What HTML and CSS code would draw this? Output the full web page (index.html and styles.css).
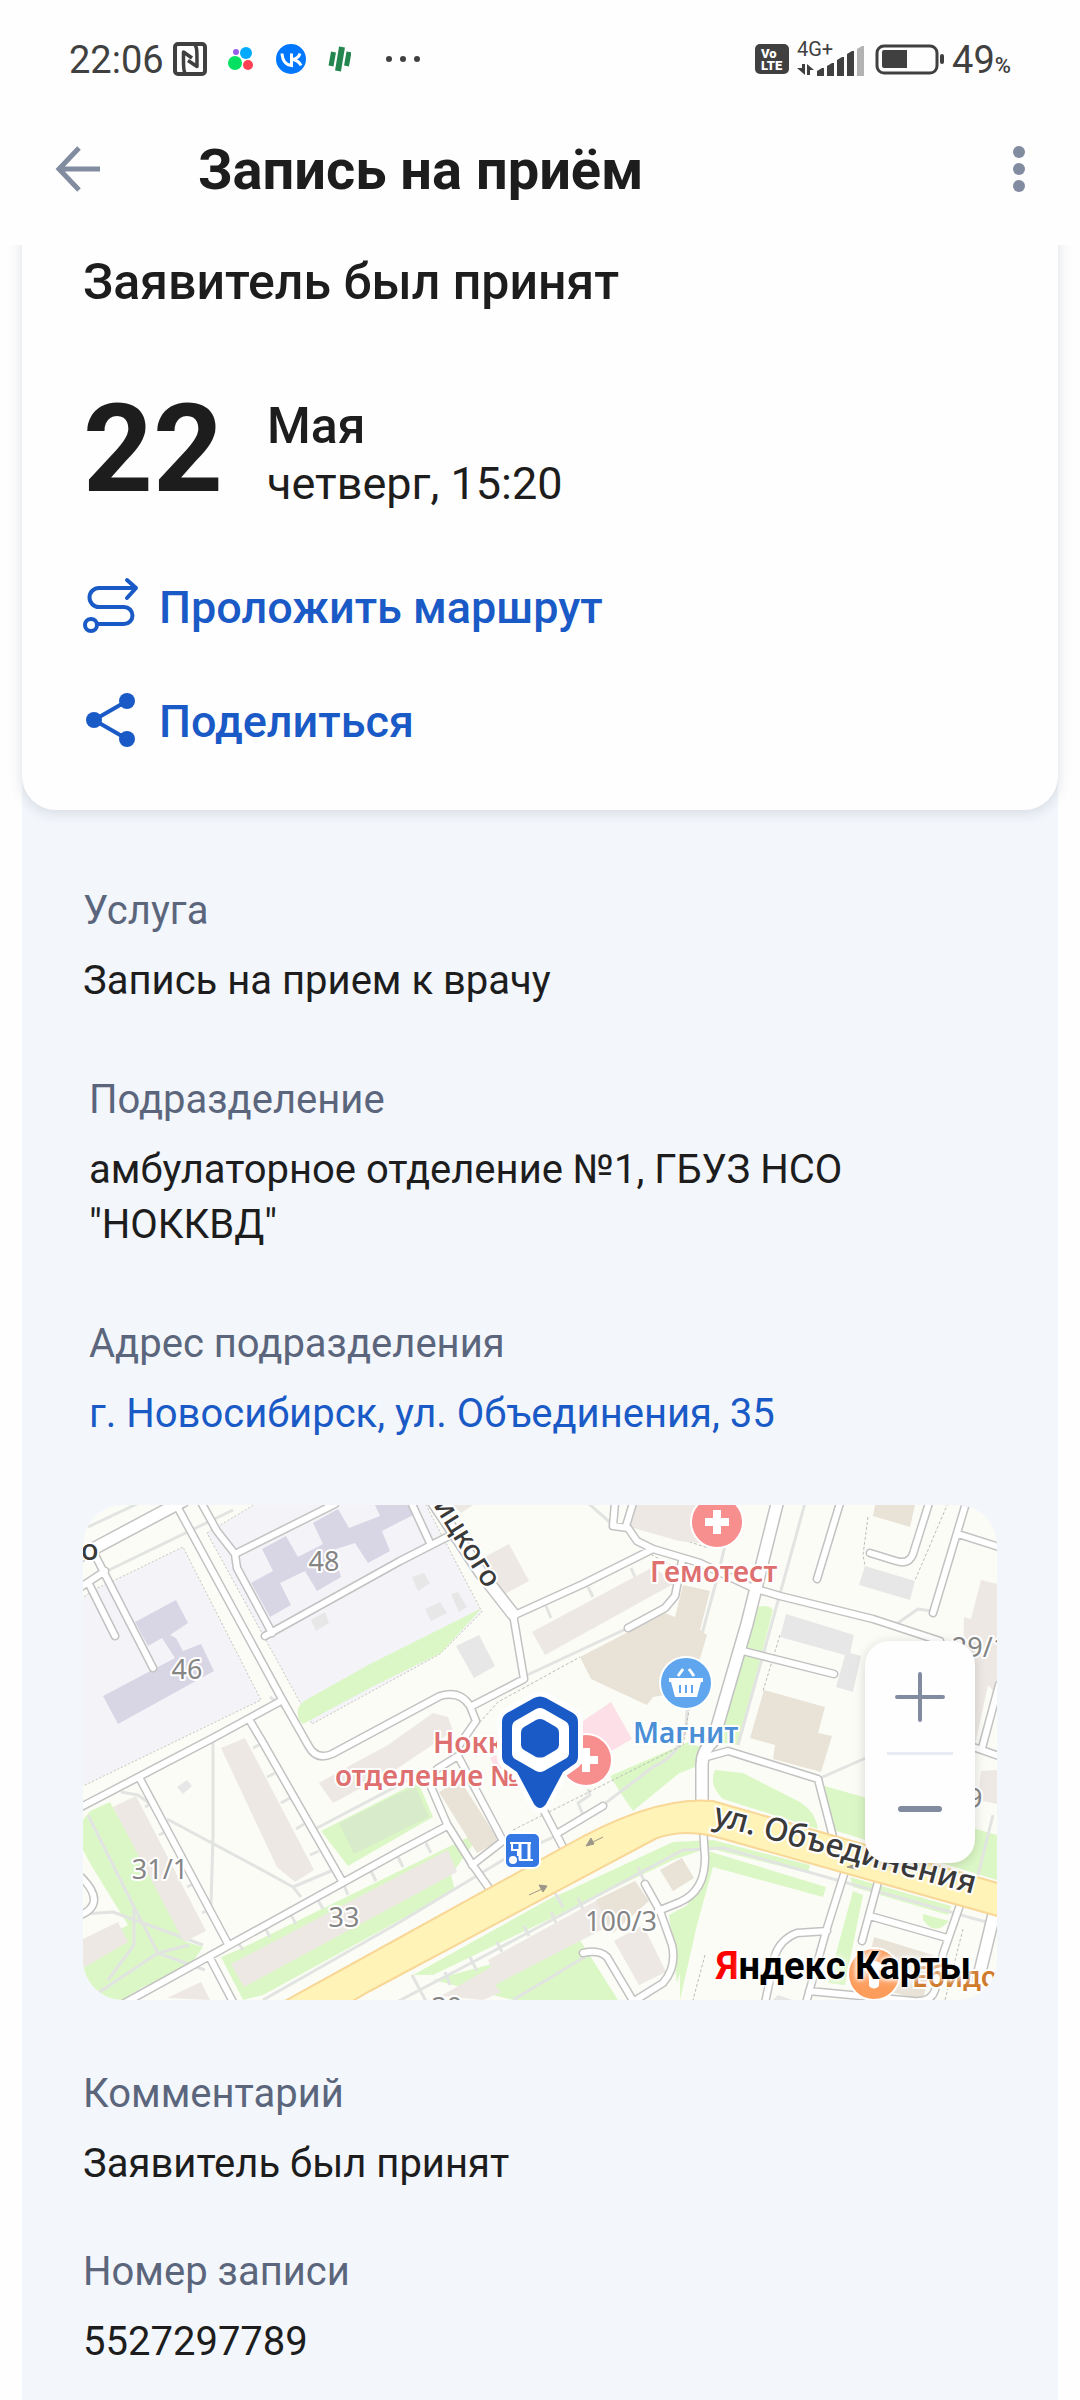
FILE: index.html
```html
<!DOCTYPE html>
<html lang="ru">
<head>
    <meta charset="UTF-8">
    <meta name="viewport" content="width=device-width, initial-scale=1.0">
    <title>Запись на приём</title>
    <link rel="stylesheet" href="styles.css">
</head>
<body>

    <!-- Status bar -->
    <div class="status-bar">
        <div class="status-left">
            <div class="status-clock">
                <span class="status-text">22:06</span>
                <svg width="34" height="34" viewBox="0 0 34 34" aria-hidden="true">
                    <rect x="2" y="2" width="30" height="30" rx="3" fill="none" stroke="#404040" stroke-width="4"/>
                    <path d="M12 31C10 28 10.500 24 10.500 10L19 16M22 3c2 2 2 6 2 21.500L15 18.500" fill="none" stroke="#404040" stroke-width="3.500" stroke-linejoin="round"/>
                </svg>
            </div>
            <svg width="27" height="30" viewBox="0 0 27 30" aria-hidden="true">
                <circle cx="8" cy="8" r="3" fill="#965eeb"/>
                <circle cx="18" cy="9" r="6" fill="#00aaff"/>
                <circle cx="7" cy="19" r="7" fill="#04e061"/>
                <circle cx="20" cy="21" r="5" fill="#ff4053"/>
            </svg>
            <svg width="30" height="30" viewBox="0 0 30 30" aria-hidden="true">
                <circle cx="15" cy="15" r="15" fill="#0077ff"/>
                <path d="M6 9.500c.5 7 4 11.500 9.500 12V9.500M24 9.500c-1 3-4 5.500-8 6 4 .5 7.500 2.500 9 6" fill="none" stroke="#fff" stroke-width="3"/>
            </svg>
            <svg width="24" height="30" viewBox="0 0 24 30" aria-hidden="true">
                <g fill="none" stroke="#23864f" stroke-width="5" stroke-linecap="butt">
                    <path d="M11 27L15 3" stroke-width="6"/>
                    <path d="M4 22L6.500 8"/>
                    <path d="M19.500 22L22 8"/>
                </g>
            </svg>
            <svg width="48" height="30" viewBox="0 0 48 30" aria-hidden="true">
                <g fill="#404040">
                    <circle cx="17" cy="15" r="3"/>
                    <circle cx="31" cy="15" r="3"/>
                    <circle cx="45" cy="15" r="3"/>
                </g>
            </svg>
        </div>
        <div class="status-right">
            <svg width="34" height="30" viewBox="0 0 34 30" aria-hidden="true">
                <rect width="34" height="30" rx="5" fill="#404040"/>
                <text x="6" y="14" class="volte">Vo</text>
                <text x="6" y="26" class="volte">LTE</text>
            </svg>
            <svg width="69" height="44" viewBox="0 -4 69 44" aria-hidden="true">
                <text x="0" y="15" class="network">4G+</text>
                <g fill="#404040">
                    <path d="M5 23h3v11L0 27h5zM10 23l7 6h-4v5h-3z"/>
                    <path d="M20 30l5-3h2v8h-7z"/>
                    <path d="M30 25l5-3h2v13h-7z"/>
                    <path d="M40 19l5-3h2v19h-7z"/>
                    <path d="M50 13l5-3h2v25h-7z"/>
                </g>
                <path d="M60 8l5-3h2v30h-7z" fill="#b3b3b3"/>
            </svg>
            <svg width="70" height="32" viewBox="0 0 70 32" aria-hidden="true">
                <rect x="3" y="3" width="60" height="27" rx="7" fill="none" stroke="#404040" stroke-width="3"/>
                <path d="M10 7h23v18H10a2 2 0 0 1-2-2V9a2 2 0 0 1 2-2z" fill="#404040"/>
                <rect x="66" y="11" width="4" height="10" rx="2" fill="#404040"/>
            </svg>
            <span class="status-text">49<small>%</small></span>
        </div>
    </div>

    <!-- Header -->
    <header class="header">
        <button class="icon-button" aria-label="Назад">
            <svg width="46" height="46" viewBox="0 0 46 46">
                <path d="M24 2L4 23l20 21M4 23h41" fill="none" stroke="#828ca0" stroke-width="5"/>
            </svg>
        </button>
        <h1>Запись на приём</h1>
        <button class="icon-button" aria-label="Меню">
            <svg width="12" height="46" viewBox="0 0 12 46">
                <g fill="#828ca0">
                    <circle cx="6" cy="6" r="6"/>
                    <circle cx="6" cy="23" r="6"/>
                    <circle cx="6" cy="40" r="6"/>
                </g>
            </svg>
        </button>
    </header>

    <main class="content">
        <!-- Appointment card -->
        <section class="card">
            <h2>Заявитель был принят</h2>
            <div class="date">
                <div class="day">22</div>
                <div>
                    <div class="month">Мая</div>
                    <div class="time">четверг, 15:20</div>
                </div>
            </div>
            <div class="actions">
                <button class="action">
                    <svg width="56" height="56" viewBox="0 0 56 56">
                        <g fill="none" stroke="#1a5ac6" stroke-width="4" stroke-linecap="round">
                            <circle cx="8" cy="45" r="6"/>
                            <path d="M15 44h26a8.500 8.500 0 0 0 0-17H16a9.500 9.500 0 0 1 0-19h36"/>
                            <path d="M44 0l9 8-9 10" stroke-linejoin="round"/>
                        </g>
                    </svg>
                    Проложить маршрут
                </button>
                <button class="action">
                    <svg width="56" height="56" viewBox="0 0 56 56">
                        <path d="M44 7L11 26l33 19" fill="none" stroke="#1a5ac6" stroke-width="4"/>
                        <g fill="#1a5ac6">
                            <circle cx="44" cy="7" r="8"/>
                            <circle cx="11" cy="26" r="8"/>
                            <circle cx="44" cy="45" r="8"/>
                        </g>
                    </svg>
                    Поделиться
                </button>
            </div>
        </section>

        <!-- Details -->
        <section class="details">
            <div class="field">
                <p class="label">Услуга</p>
                <p class="value">Запись на прием к врачу</p>
            </div>
            <div class="field inset">
                <p class="label">Подразделение</p>
                <p class="value">амбулаторное отделение №1, ГБУЗ НСО "НОККВД"</p>
            </div>
            <div class="field inset">
                <p class="label">Адрес подразделения</p>
                <p class="value"><a href="#map">г. Новосибирск, ул. Объединения, 35</a></p>
            </div>

            <div class="map" id="map">
                <svg class="map-canvas" viewBox="0 0 914 495" role="img" aria-label="Карта">
                    <defs>
                        <path id="roads" d="M95 3L200 196L225 240Q233 256 249 249L357 191Q377 185 387 201L393 216L377 239
                            M119 -1L134 26L152 49L154 63L189 128 M154 48L252 -1 M182 131L317 56L366 31 M328 -3L347 38
                            M430 109L441 174L389 201 M434 109L500 79L570 44L617 58L670 83L697 91L790 114L857 136
                            M532 -2L530 21L545 23L554 36L570 44 M550 -2L543 21 M545 123L582 103L592 91L599 56
                            M757 -2L734 74 M846 -2L830 49Q826 60 813 56L787 48 M883 -2L850 108 M875 29L916 42
                            M660 146L751 169 M916 180L899 243 M890 242L916 251
                            M620 253L645 246L735 274L750 332 M762 366L744 423L723 498 M795 377L779 436 M787 411L864 433
                            M877 400L860 449L852 485Q848 498 830 496L726 486 M744 426L714 428Q698 434 692 450L682 498
                            M620 322L622 353Q622 386 597 397L575 406 M562 379L577 406L589 440Q594 462 580 478L548 498
                            M500 448Q516 444 524 452L552 499 M-2 302L130 233L196 197 M57 274L145 439 M167 216L179 236L259 376
                            M38 500L317 346L364 321 M127 453L151 499 M-2 82L22 66 M12 50L70 163 M7 81L32 131
                            M-2 372Q24 398 -2 410 M345 275L364 319L389 359L408 386 M354 264L375 251L420 336L389 360
                            M458 300L482 346 M475 328L520 301"/>
                        <path id="wide-roads" d="M-5 52L100 -4 M350 -4L398 68L430 109 M695 -5L664 119L630 236Q619 246 619 260V300 M912 405L895 475"/>
                        <path id="avenue" d="M200 497L287 449L479 343Q570 290 630 296L918 379V412L630 331Q600 324 574 333L287 486L266 498"/>
                    </defs>

                    <rect width="914" height="495" fill="#fbfcf6"/>

                    <!-- School grounds -->
                    <g fill="#f4f4f8" stroke="#c8c4bd" stroke-dasharray="2 2">
                        <path d="M-2 94L12 84L30 76L100 42L178 195L-2 282z"/>
                        <path d="M124 28L174 -2H342L399 107L357 149L229 219z"/>
                    </g>

                    <!-- Lawns -->
                    <g fill="#dcf7c6">
                        <path d="M215 203L221 196L287 159L399 103L358 148L287 183L220 219Q213 214 215 203z"/>
                        <path d="M7 306L27 297L104 437L120 442L105 464L60 482L40 495H0V445L45 420L8 360L0 345V315z"/>
                        <path d="M238 326L317 286L335 277L350 312L265 361z"/>
                        <path d="M138 452L155 445L400 325L368 370L372 385L180 490L160 495z"/>
                        <path d="M670 103Q685 98 690 105L655 240L642 238L632 238z"/>
                        <path d="M632 265L660 268L715 296Q732 305 735 324L640 294Q625 280 632 265z"/>
                        <path d="M738 280L914 330V375L750 325z"/>
                        <path d="M527 271L612 234L600 265L550 306L539 290z"/>
                        <path d="M330 470L470 392L480 388L590 337L630 335L727 360L725 368L625 343L590 355L350 470z"/>
                        <path d="M350 475L497 435L535 495H430z"/>
                        <path d="M625 346L743 382L740 392L630 362L614 420L597 495V420z"/>
                        <path d="M586 410L612 396L617 405L594 478z"/>
                        <path d="M627 243L612 262L597 268L610 240z"/>
                        <path d="M770 386L780 390L762 480L745 478z"/>
                        <path d="M767 372L868 401L865 410L770 382zM840 409L866 416Q852 432 840 415z"/>
                    </g>
                    <path d="M256 318L332 281L346 312L271 349z" fill="#d8ebca"/>

                    <!-- Footpaths -->
                    <g fill="none" stroke="#e2e4e2" stroke-width="3" stroke-linejoin="round">
                        <path d="M5 22L60 -4 M24 66L150 5 M130 236V330L128 400 M84 314L170 360L210 382L218 392 M210 382L248 366"/>
                        <path d="M38 287L55 290L66 298 M5 310L50 400L75 448L122 465 M51 402V440L25 475 M12 490L75 448L106 440 M0 409L30 407L120 440"/>
                        <path d="M180 495L317 417L420 355L475 330 M234 323L335 270 M440 172L545 123 M310 499L390 457L600 345L640 343L914 420"/>
                        <path d="M430 495L505 450 M329 470L345 500 M652 -2L635 70L616 140 M722 -2L705 60L655 240 M605 195L603 220Q598 250 570 262L520 300"/>
                        <path d="M812 120L835 104L848 106 M735 274L785 252 M620 325L914 405 M505 -2L530 20 M910 310L895 370"/>
                        <path d="M205 206L187 192 M170 243L178 239 M184 272L192 268 M198 298L207 293 M213 324L221 319 M227 350L236 346"/>
                        <path d="M62 302L70 298 M76 330L84 326 M104 382L112 378 M119 408L128 404"/>
                        <path d="M154 436L160 445 M182 423L187 432 M208 410L213 419 M235 395L240 404 M261 380L265 390 M288 366L293 376 M343 338L348 348 M315 352L320 362"/>
                        <path d="M362 467L367 480 M387 452L394 466 M414 437L419 447 M441 421L446 431 M468 407L473 418 M495 393L500 404 M472 388L480 402 M555 362L562 378"/>
                        <path d="M463 101L468 113 M505 82L510 92 M548 63L552 72 M505 284L507 290L495 298L501 312"/>
                    </g>
                    <g fill="none" stroke="#bdbdb6" stroke-dasharray="3 2">
                        <path d="M430 325L600 240L607 200 M390 225L415 197L497 152 M606 70L560 45 M380 255L418 330"/>
                        <path d="M785 12L780 50L786 82 M865 -2L845 45L832 75 M697 130L680 186 M854 189L835 262L815 270 M622 450L610 495 M880 424L862 495"/>
                        <path d="M555 -2L550 18L625 43"/>
                    </g>

                    <!-- School buildings -->
                    <g fill="#d8d5e5">
                        <path d="M52 117L93 95L105 118L87 130L93 133L100 146L118 139L131 166L35 219L20 191L92 153L79 133L65 141z"/>
                        <path d="M168 78L190 66L179 44L203 31L215 52L240 39L230 18L255 4L266 23L297 11L292 0H325L330 10L299 26L307 46L285 58L272 38L250 45L258 72L234 86L222 66L197 78L208 100L187 112z"/>
                    </g>
                    <g fill="#e7e7e7">
                        <path d="M228 115L242 107L246 118L233 126zM329 72L341 68L347 78L335 86zM342 104L357 97L364 108L348 116zM368 89L375 87L384 102L376 107z"/>
                        <path d="M373 141L396 130L412 161L391 173zM94 282L104 275L109 281L100 289z"/>
                        <path d="M782 61L832 76L827 95L776 80zM703 109L771 130L767 148L778 151L770 187L753 182L762 150L697 132z"/>
                        <path d="M690 495L695 490L715 497z"/>
                    </g>

                    <!-- Residential buildings -->
                    <g fill="#ede8e3">
                        <path d="M398 54L426 39L446 76L416 92zM370 0H390L378 8z"/>
                        <path d="M449 127L570 62L592 78L462 150z"/>
                        <path d="M552 0H617V38L596 36L547 22z"/>
                        <path d="M138 243L162 233L231 365L212 377L194 362z"/>
                        <path d="M30 302L53 291L123 426L101 437z"/>
                        <path d="M148 459L365 345L374 367L161 482z"/>
                        <path d="M0 434L35 417L45 437L0 463z"/>
                        <path d="M84 493L118 477L127 495z"/>
                        <path d="M236 278L268 260L305 240L350 208L365 212L370 226L312 265L250 298z"/>
                        <path d="M358 491L408 462L405 455L520 392L528 420L412 480L418 487L400 495z"/>
                        <path d="M531 436L560 420L583 467L556 480z"/>
                        <path d="M881 112L888 114L898 75L914 79V190L905 180L892 240L878 232z"/>
                        <path d="M898 266L914 265V299L895 295z"/>
                    </g>
                    <g fill="#e9e2d7">
                        <path d="M497 152L582 108L592 112L600 80L627 86L617 125L624 130L612 170L595 188L570 192L564 200L508 174z"/>
                        <path d="M792 0H832L827 22L790 11z"/>
                        <path d="M681 185L742 202L735 228L749 231L738 267L690 254L692 240L667 233z"/>
                        <path d="M356 287L377 275L416 336L394 348z"/>
                        <path d="M577 365L599 353L611 373L590 386z"/>
                        <path d="M513 395L552 376L566 396L530 428z"/>
                        <path d="M791 432L850 450L840 495L780 480z"/>
                    </g>
                    <g fill="#fddfe8">
                        <path d="M500 216L528 197L549 234L518 252L495 240z"/>
                        <path d="M407 253L413 250L421 262L414 266z"/>
                    </g>

                    <!-- Roads -->
                    <g fill="none" stroke-linecap="round" stroke-linejoin="round">
                        <use href="#roads" stroke="#c2c2c2" stroke-width="9"/>
                        <use href="#wide-roads" stroke="#c2c2c2" stroke-width="14"/>
                        <use href="#roads" stroke="#fff" stroke-width="6"/>
                        <use href="#wide-roads" stroke="#fff" stroke-width="11"/>
                    </g>
                    <use href="#avenue" fill="#fff3b8" stroke="#f8d797" stroke-width="2"/>

                    <!-- Traffic direction -->
                    <g fill="#9c978a" stroke="#9c978a">
                        <path d="M520 332L508 338" stroke-width="1"/>
                        <path d="M503 341L508 333L511 339z"/>
                        <path d="M446 390L459 384" stroke-width="1"/>
                        <path d="M464 381L456 380L460 387z"/>
                        <path d="M773 364L764 362L770 360z"/>
                    </g>

                    <!-- House numbers -->
                    <g class="house">
                        <text x="241" y="66">48</text>
                        <text x="104" y="174">46</text>
                        <text x="77" y="374">31/1</text>
                        <text x="261" y="422">33</text>
                        <text x="538" y="426">100/3</text>
                        <text x="364" y="512">39</text>
                        <text x="897" y="152">29/1</text>
                        <text x="884" y="303">29</text>
                    </g>

                    <!-- Streets -->
                    <g class="street">
                        <text x="-2" y="55">о</text>
                        <text transform="translate(350 0) rotate(58)">ицкого</text>
                        <text class="main-street" transform="translate(629 319) rotate(15)">ул. Объединения</text>
                    </g>

                    <!-- Places -->
                    <g stroke="#fff" stroke-width="2">
                        <circle cx="634" cy="17" r="26" fill="#f88f8f"/>
                        <circle cx="503" cy="255" r="26" fill="#f88f8f"/>
                        <circle cx="603" cy="178" r="26" fill="#5fa6ee"/>
                        <circle cx="791" cy="469" r="26" fill="#fd9d5c"/>
                    </g>
                    <path d="M630 5h8v8h8v8h-8v8h-8v-8h-8v-8h8zM499 243h8v8h8v8h-8v8h-8v-8h-8v-8h8z" fill="#fff"/>
                    <path d="M586 173h34v4h-2l-4 15h-22l-4-15h-2z" fill="#fff"/>
                    <path d="M595 171l5-7M611 171l-5-7" stroke="#fff" stroke-width="3"/>
                    <path d="M597 180v8M603 180v8M609 180v8" stroke="#5fa6ee" stroke-width="2"/>
                    <path d="M781 461q10-10 20 0l-2 4h-3v16q-5 5-10 0v-16h-4z" fill="#fff"/>
                    <g class="place">
                        <text x="567" y="77" fill="#de7070">Гемотест</text>
                        <text x="550" y="238" fill="#4a8fd6">Магнит</text>
                        <text x="350" y="248" fill="#de7070">Нокк</text>
                        <text x="252" y="281" fill="#de7070">отделение №</text>
                        <text x="829" y="482" fill="#cf7a2c">Ебидоеби</text>
                    </g>

                    <!-- Bus stop -->
                    <rect x="422" y="328" width="35" height="35" rx="6" fill="#3577e3" stroke="#fff" stroke-width="2"/>
                    <g fill="none" stroke="#fff" stroke-width="2">
                        <path d="M427 338h21M436 355h14"/>
                        <path d="M437 338v17M446 338v17" stroke-width="3"/>
                        <path d="M429 338v7h6v6"/>
                    </g>
                    <circle cx="430" cy="355" r="4" fill="#fff"/>

                    <!-- Pin -->
                    <path d="M451 193Q457 190 463 193L490 208Q495 211 495 217V252Q495 257 490 260L480 267L463 299Q457 307 451 299L434 267L424 260Q419 257 419 252V217Q419 211 424 208z" fill="#1a5ac6" stroke="#fff" stroke-width="10" stroke-linejoin="round" paint-order="stroke"/>
                    <path d="M453 204Q457 202 461 204L482 216Q486 218 486 223V248Q486 252 482 254L461 266Q457 268 453 266L432 254Q429 252 429 248V223Q429 218 432 216z" fill="#fff"/>
                    <path d="M453 215Q457 213 461 215L473 222Q476 224 476 228V240Q476 243 473 245L461 252Q457 253 453 252L441 245Q438 243 438 240V228Q438 224 441 222z" fill="#1a5ac6"/>
                </svg>
                <div class="map-zoom">
                    <button aria-label="Приблизить">
                        <svg width="50" height="50" viewBox="0 0 50 50">
                            <path d="M2 25h46M25 2v46" stroke="#828ca0" stroke-width="4" stroke-linecap="round"/>
                        </svg>
                    </button>
                    <button aria-label="Отдалить">
                        <svg width="50" height="50" viewBox="0 0 50 50">
                            <path d="M6 25h38" stroke="#828ca0" stroke-width="6" stroke-linecap="round"/>
                        </svg>
                    </button>
                </div>
                <div class="map-logo"><span>Я</span>ндекс Карты</div>
            </div>

            <div class="field compact">
                <p class="label">Комментарий</p>
                <p class="value">Заявитель был принят</p>
            </div>
            <div class="field">
                <p class="label">Номер записи</p>
                <p class="value">5527297789</p>
            </div>
        </section>
    </main>

</body>
</html>
```
FILE: styles.css
```css
body {
    font-family: Roboto, "Noto Sans", sans-serif;
    margin: 0;
    min-height: 100vh;
    display: flex;
    flex-direction: column;
    background-color: #fefefe;
    color: #1d1d1d;
}

h1, h2, p {
    margin: 0;
}

svg {
    display: block;
    flex-shrink: 0;
}

button {
    padding: 0;
    border: none;
    background: none;
    color: inherit;
    font-family: inherit;
    cursor: pointer;
}

button svg {
    overflow: visible;
}

a {
    color: #1a5ac6;
    text-decoration: none;
}

/* Status bar */
.status-bar {
    display: flex;
    justify-content: space-between;
    align-items: center;
    height: 118px;
    padding: 0 69px;
    color: #404040;
}

.status-left,
.status-right,
.status-clock {
    display: flex;
    align-items: center;
}

.status-left {
    gap: 21px;
}

.status-clock {
    gap: 9px;
}

.status-right {
    gap: 8px;
}

.status-text {
    padding-top: 2px;
    font-size: 38px;
    line-height: 44px;
}

.status-text small {
    font-size: 22px;
    line-height: 1;
    font-weight: 500;
}

.volte {
    font-family: Roboto, sans-serif;
    font-size: 13px;
    font-weight: 900;
    fill: #fff;
}

.network {
    font-family: Roboto, sans-serif;
    font-size: 20px;
    fill: #404040;
}

/* Header */
.header {
    position: relative;
    z-index: 1;
    display: flex;
    align-items: center;
    padding: 13px 55px 39px;
    background-color: #fefefe;
}

.header h1 {
    flex: 1;
    margin-left: 97px;
    padding-top: 4px;
    font-size: 56px;
    line-height: 71px;
    font-weight: 700;
}

/* Appointment */
.content {
    flex: 1;
    margin: 0 22px;
    background-color: #f3f6fb;
}

/* The top of the card is scrolled under the header */
.card {
    margin-top: -40px;
    padding: 47px 61px 60px;
    background-color: #fefefe;
    border-radius: 0 0 34px 34px;
    box-shadow: 0 2px 14px rgba(40, 60, 80, 0.16);
}

.card h2 {
    font-size: 50px;
    line-height: 60px;
    font-weight: 500;
}

.date {
    display: flex;
    align-items: flex-end;
    gap: 44px;
    margin-top: 76px;
}

.day {
    font-size: 122px;
    line-height: 124px;
    font-weight: 700;
}

.month {
    font-size: 50px;
    line-height: 60px;
    font-weight: 500;
}

.time {
    font-size: 45px;
    line-height: 56px;
}

.actions {
    display: flex;
    flex-direction: column;
    align-items: flex-start;
    gap: 58px;
    margin-top: 68px;
}

.action {
    display: flex;
    align-items: center;
    gap: 20px;
    color: #1a5ac6;
    font-size: 45px;
    line-height: 56px;
    font-weight: 500;
}

/* Details */
.details {
    padding: 73px 61px 24px;
}

.field {
    margin-bottom: 64px;
    font-size: 40px;
    line-height: 55px;
}

.field.inset {
    padding: 0 6px;
}

.field.compact {
    margin-bottom: 53px;
}

.field:last-child {
    margin-bottom: 0;
}

.label {
    margin-bottom: 15px;
    color: #5b667d;
}

/* Map */
.map {
    position: relative;
    margin-bottom: 66px;
    border-radius: 40px;
    overflow: hidden;
}

.map-canvas {
    width: 100%;
    height: auto;
}

.map-canvas text {
    font-family: "Noto Sans", sans-serif;
    paint-order: stroke;
    stroke: #fff;
    stroke-width: 4px;
    stroke-linejoin: round;
}

.house text {
    font-size: 27px;
    fill: #858585;
    text-anchor: middle;
}

.street text {
    font-size: 29px;
    font-weight: 500;
    fill: #3a3a3a;
}

.street .main-street {
    font-size: 32px;
}

.place text {
    font-size: 28px;
    font-weight: 600;
}

.map-zoom {
    position: absolute;
    top: 136px;
    right: 22px;
    width: 110px;
    background-color: #fefefe;
    border-radius: 24px;
    box-shadow: 0 2px 12px rgba(0, 0, 0, 0.15);
}

.map-zoom button {
    display: flex;
    justify-content: center;
    align-items: center;
    width: 66px;
    height: 111px;
    margin: 0 auto;
}

.map-zoom button + button {
    border-top: 3px solid #e8ebf1;
}

.map-logo {
    position: absolute;
    right: 26px;
    bottom: 6px;
    color: #000;
    font-size: 38px;
    line-height: 56px;
    font-weight: 700;
    text-shadow: 0 0 4px #fff, 0 0 4px #fff, 0 0 8px #fff;
}

.map-logo span {
    color: #ff0000;
}
```
